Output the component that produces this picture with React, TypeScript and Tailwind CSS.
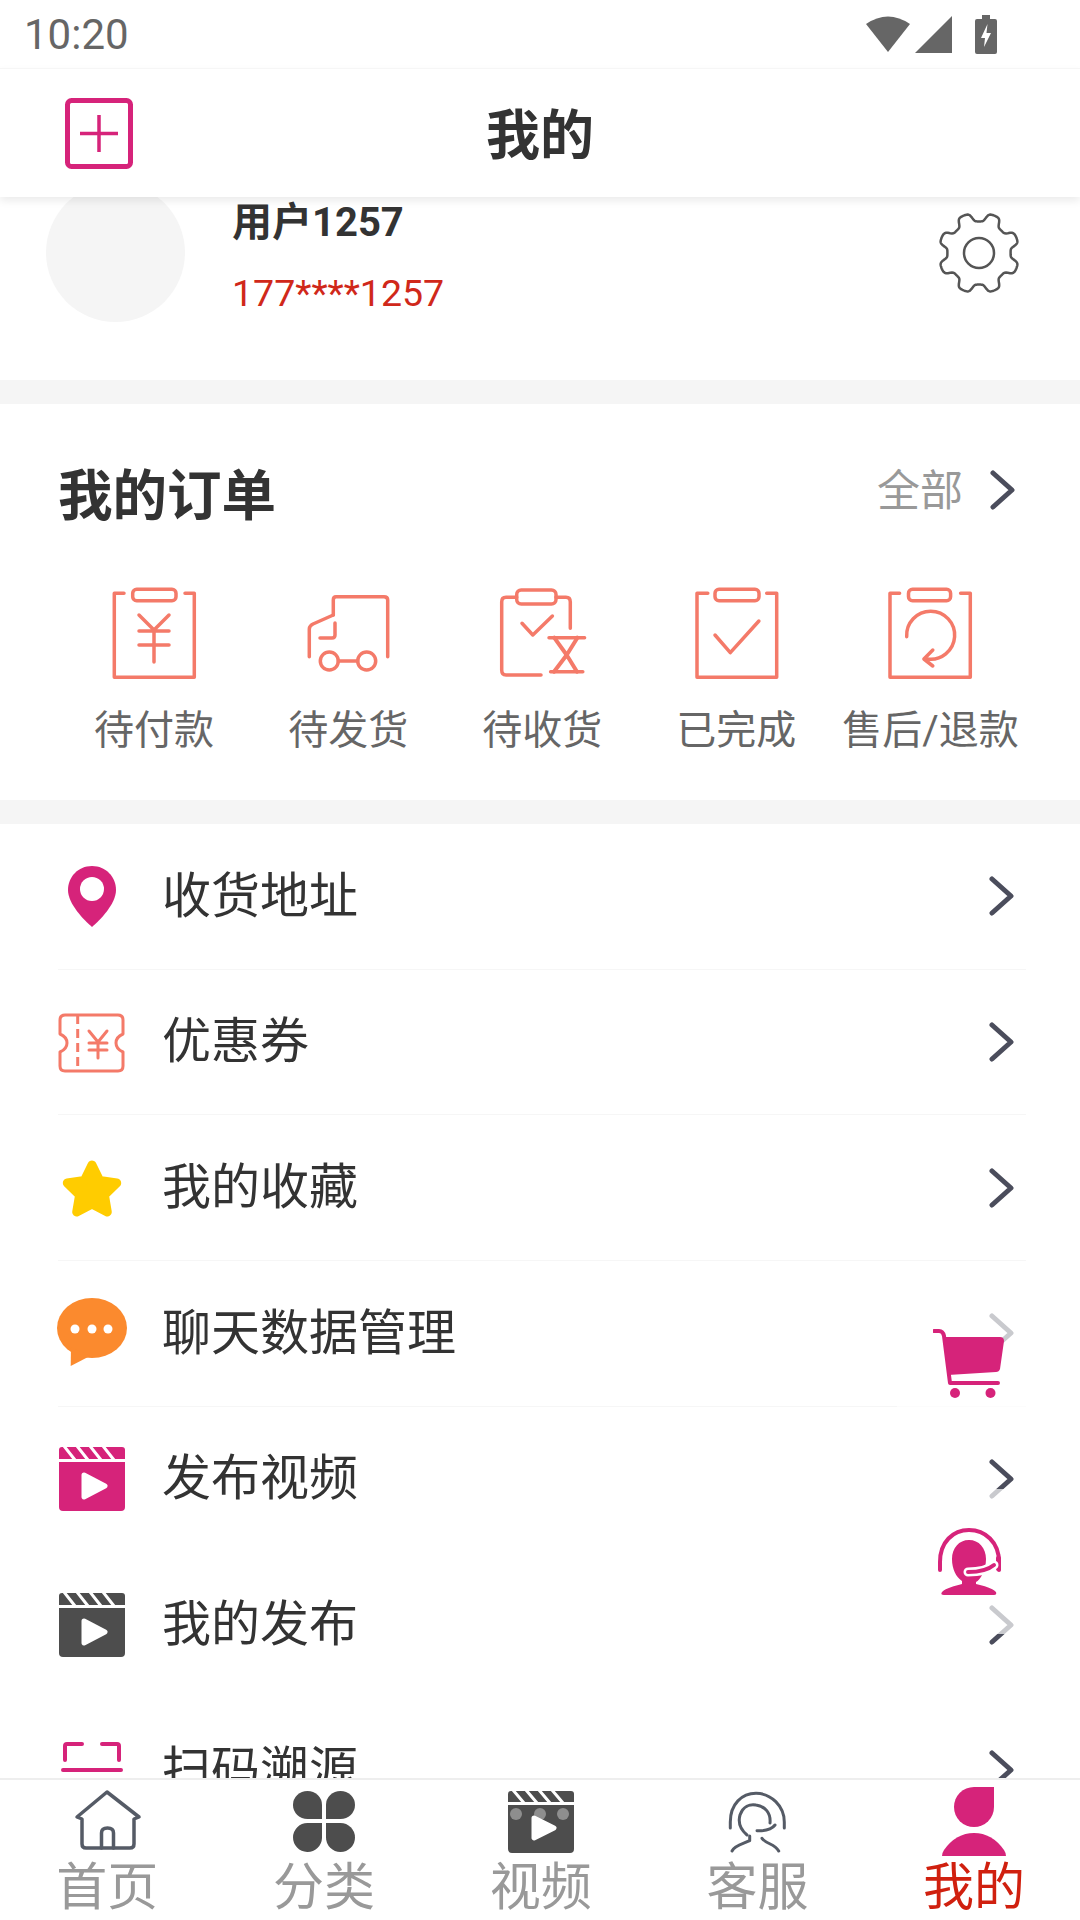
import React from 'react';

const PINK = '#d6237a';
const SALMON = '#f47a69';

function Chevron({ color = '#4b4d5c' }: { color?: string }) {
    return (
        <svg width="26" height="40" viewBox="0 0 26 40" fill="none" stroke={color} strokeWidth="5" strokeLinecap="round" strokeLinejoin="round">
            <path d="M3 3 L22 20 L3 37" />
        </svg>
    );
}

function Clapper({ color }: { color: string }) {
    return (
        <svg width="66" height="64" viewBox="0 0 66 64">
            <path d="M3 0 H63 Q66 0 66 3 V12 H0 V3 Q0 0 3 0 Z" fill={color} />
            <path d="M5 -1 L16 13 M18 -1 L29 13 M31 -1 L42 13 M44 -1 L55 13" stroke="#fff" strokeWidth="3" />
            <path d="M0 15 H66 V60 Q66 64 62 64 H4 Q0 64 0 60 Z" fill={color} />
            <path d="M25 28 L46 39 L25 50 Z" fill="#fff" stroke="#fff" strokeWidth="5" strokeLinejoin="round" />
        </svg>
    );
}

function OrderIcon({ children }: { children: React.ReactNode }) {
    return (
        <svg width="96" height="96" viewBox="0 0 96 96" fill="none" stroke={SALMON} strokeWidth="3.5" strokeLinecap="round" strokeLinejoin="round">
            {children}
        </svg>
    );
}

const orders = [
    {
        label: '待付款',
        icon: (
            <OrderIcon>
                <path d="M18 8.3 H8.3 V92.3 H88.3 V8.3 H79" />
                <rect x="26.7" y="4.3" width="43.3" height="11.4" rx="4" />
                <path d="M33 30 L48 45 L63 30 M33 46 H63 M33 60 H63 M48 45 V77" />
            </OrderIcon>
        ),
    },
    {
        label: '待发货',
        icon: (
            <OrderIcon>
                <path d="M33.3 30 V15 Q33.3 11.7 36 11.7 H84 Q87.7 11.7 87.7 15 V71.7" />
                <path d="M33.3 30 L13 39 Q9.3 41 9.3 44 V71.7" />
                <path d="M35 38 V50 Q35 53 32 53 H20" />
                <circle cx="29.3" cy="76" r="9" />
                <circle cx="66.7" cy="76" r="9" />
                <path d="M38.3 76 H57.7" />
            </OrderIcon>
        ),
    },
    {
        label: '待收货',
        icon: (
            <OrderIcon>
                <path d="M22.7 12.3 H12 Q7.7 12.3 7.7 17 V85 Q7.7 90 12 90 H47" />
                <path d="M62 12.3 H72 Q76.3 12.3 76.3 17 V43.3" />
                <rect x="22.7" y="5" width="39.3" height="14" rx="4.5" />
                <path d="M28 38.3 L38.8 50 L58.4 31" />
                <path d="M55 52.7 H90.6 M56.6 86.7 H88.8" />
                <path d="M60.2 52.7 L72.7 70 L83.4 52.7 M72.7 70 L60 86.7 M72.7 70 L83 86.7" strokeWidth="4" />
            </OrderIcon>
        ),
    },
    {
        label: '已完成',
        icon: (
            <OrderIcon>
                <path d="M19.8 8.3 H9 V92.3 H88.7 V8.3 H78.7" />
                <rect x="27" y="4.3" width="44" height="11.4" rx="4" />
                <path d="M27 50 L42.3 67.7 L70.9 36" />
            </OrderIcon>
        ),
    },
    {
        label: '售后/退款',
        icon: (
            <OrderIcon>
                <path d="M17.6 8.3 H8 V92.3 H88.3 V8.3 H78.6" />
                <rect x="26.5" y="4.3" width="42.1" height="11.4" rx="4" />
                <path d="M24.7 51.7 A24 24 0 1 1 45.4 74" />
                <path d="M50.8 65 L41.9 74 L50.8 81" />
            </OrderIcon>
        ),
    },
];

const rows: { label: string; line: boolean; icon: React.ReactNode }[] = [
    {
        label: '收货地址',
        line: true,
        icon: (
            <svg width="72" height="72" viewBox="0 0 72 72">
                <path d="M36 6 C22 6 12 17 12 30 C12 44 28 60 36 67 C44 60 60 44 60 30 C60 17 50 6 36 6 Z" fill={PINK} />
                <circle cx="36" cy="29" r="12" fill="#fff" />
            </svg>
        ),
    },
    {
        label: '优惠券',
        line: true,
        icon: (
            <svg width="72" height="72" viewBox="0 0 72 72" fill="none" stroke={SALMON} strokeWidth="3" strokeLinecap="round" strokeLinejoin="round">
                <path d="M9 9 H62 Q67 9 67 14 V28 Q60 31 60 37 Q60 43 67 46 V60 Q67 65 62 65 H9 Q4 65 4 60 V46 Q11 43 11 37 Q11 31 4 28 V14 Q4 9 9 9 Z" />
                <path d="M21.7 9 V65" strokeDasharray="9 5" strokeLinecap="butt" />
                <path d="M33 25 L42 36 L51 25 M33 37 H51 M33 44 H51 M42 36 V52" />
            </svg>
        ),
    },
    {
        label: '我的收藏',
        line: true,
        icon: (
            <svg width="72" height="72" viewBox="0 0 72 72">
                <path
                    d="M36 13 L43.6 28.5 L60.7 31 L48.4 43 L51.3 60 L36 52 L20.7 60 L23.6 43 L11.3 31 L28.4 28.5 Z"
                    fill="#ffcc00"
                    stroke="#ffcc00"
                    strokeWidth="9"
                    strokeLinejoin="round"
                />
            </svg>
        ),
    },
    {
        label: '聊天数据管理',
        line: true,
        icon: (
            <svg width="72" height="72" viewBox="0 0 72 72">
                <ellipse cx="36" cy="31" rx="35" ry="30" fill="#fb8a2e" />
                <path d="M15 50 L14.7 69 L34 59 Z" fill="#fb8a2e" />
                <circle cx="19" cy="32" r="4.5" fill="#fff" />
                <circle cx="36" cy="32" r="4.5" fill="#fff" />
                <circle cx="52" cy="32" r="4.5" fill="#fff" />
            </svg>
        ),
    },
    { label: '发布视频', line: false, icon: <Clapper color={PINK} /> },
    { label: '我的发布', line: false, icon: <Clapper color="#4d4d4d" /> },
    {
        label: '扫码溯源',
        line: false,
        icon: (
            <svg width="72" height="72" viewBox="0 0 72 72" fill="none" stroke={PINK} strokeWidth="4" strokeLinecap="round" strokeLinejoin="round">
                <path d="M26 10 H11 Q9 10 9 12 V26 M46 10 H61 Q63 10 63 12 V26 M7 36 H65 M9 46 V60 Q9 62 11 62 H26 M63 46 V60 Q63 62 61 62 H46" />
            </svg>
        ),
    },
];

const NAV_STROKE = '#555b66';

const tabs: { label: string; active?: boolean; icon: React.ReactNode }[] = [
    {
        label: '首页',
        icon: (
            <svg width="80" height="72" viewBox="0 0 80 72" fill="none" stroke={NAV_STROKE} strokeWidth="3.5" strokeLinecap="round" strokeLinejoin="round">
                <path d="M40 6 L10 31 L15 33 V58 Q15 62 19 62 H63 Q67 62 67 58 V33 L72 31 Z" />
                <path d="M34.5 62 V47 Q34.5 42 40.5 42 Q46.5 42 46.5 47 V62" />
            </svg>
        ),
    },
    {
        label: '分类',
        icon: (
            <svg width="80" height="72" viewBox="0 0 80 72" fill="#4d4d4d">
                <path d="M38 33 H23.5 A14.5 14 0 1 1 38 19 Z" />
                <path d="M42 33 V19 A14.5 14 0 1 1 56.5 33 Z" />
                <path d="M38 37 V52 A14.5 14.5 0 1 1 23.5 37 Z" />
                <path d="M42 37 H56.5 A14.5 14.5 0 1 1 42 51.5 Z" />
            </svg>
        ),
    },
    {
        label: '视频',
        icon: (
            <svg width="80" height="72" viewBox="0 0 80 72">
                <g transform="translate(7 5)">
                    <path d="M3 0 H63 Q66 0 66 3 V11 H0 V3 Q0 0 3 0 Z" fill="#4d4d4d" />
                    <path d="M5 -1 L16 12 M18 -1 L29 12 M31 -1 L42 12 M44 -1 L55 12" stroke="#fff" strokeWidth="3" />
                    <path d="M0 14 H66 V58 Q66 62 62 62 H4 Q0 62 0 58 Z" fill="#4d4d4d" />
                    <circle cx="8" cy="23" r="6" fill="#8e8e8e" />
                    <circle cx="32" cy="23" r="6" fill="#8e8e8e" />
                    <circle cx="55" cy="23" r="6" fill="#8e8e8e" />
                    <path d="M26 27 L46 37 L26 47 Z" fill="#fff" stroke="#fff" strokeWidth="5" strokeLinejoin="round" />
                </g>
            </svg>
        ),
    },
    {
        label: '客服',
        icon: (
            <svg width="80" height="72" viewBox="0 0 80 72" fill="none" stroke={NAV_STROKE} strokeWidth="3" strokeLinecap="round" strokeLinejoin="round">
                <path d="M13.3 42 V36 C13.3 18 25 7.3 39 7.3 C54 7.3 67.3 20 67.3 36 V42" />
                <path d="M30 49 C23 43 21 36 23 29 C26 20 33 18 39 19 C48 20 54 27 53 37" />
                <path d="M40 44.7 C48 45 55 43 58 39" />
                <path d="M15 65 C18 59 26 58 32.7 54.7 V50" />
                <path d="M45 52.3 C49 58 58 58 61.7 65" />
            </svg>
        ),
    },
    {
        label: '我的',
        active: true,
        icon: (
            <svg width="80" height="72" viewBox="0 0 80 72" fill={PINK}>
                <path d="M60 1 V21 A20 20 0 1 1 40 1 Z" />
                <path d="M8 70 Q8 67 10 64 Q22 47 40 47 Q58 47 70 64 Q72 67 72 70 Z" />
            </svg>
        ),
    },
];

function gearPath() {
    const points: string[] = [];
    for (let i = 0; i < 240; i++) {
        const a = (i / 240) * Math.PI * 2;
        const r = 36 - 4.5 * Math.tanh(2.2 * Math.cos(8 * a));
        points.push(`${(42 + r * Math.sin(a)).toFixed(2)} ${(42 - r * Math.cos(a)).toFixed(2)}`);
    }
    return `M${points.join(' L')} Z`;
}

export default function App() {
    return (
        <div className="relative w-[1080px] h-[1920px] flex flex-col overflow-hidden bg-white font-['Roboto','Noto_Sans_CJK_SC',sans-serif]">
            {/* Status bar */}
            <div className="h-[68px] flex items-center pl-[24px] pr-[83px] shrink-0">
                <span className="mt-[2px] text-[42px] leading-none text-[#666666]">10:20</span>
                <div className="ml-auto flex items-center">
                    <svg width="44" height="38" viewBox="0 0 44 38" fill="#666666">
                        <path d="M22 37 L0 9 Q22 -6 44 9 Z" />
                    </svg>
                    <svg className="ml-[5px]" width="37" height="37" viewBox="0 0 37 37" fill="#666666">
                        <path d="M37 0 V37 H0 Z" />
                    </svg>
                    <svg className="ml-[23px]" width="22" height="39" viewBox="0 0 22 39">
                        <path d="M7 0 H15 V4 H20 Q22 4 22 6 V37 Q22 39 20 39 H2 Q0 39 0 37 V6 Q0 4 2 4 H7 Z" fill="#666666" />
                        <path d="M12.5 9 L6 23 H10 L9 32 L16 18 H11.5 Z" fill="#fff" />
                    </svg>
                </div>
            </div>

            {/* Header */}
            <div className="relative z-10 h-[129px] shrink-0 flex items-center justify-center bg-white border-t border-[#f6f6f6] shadow-[0_4px_8px_rgba(0,0,0,0.08)]">
                <svg className="absolute left-[65px] top-[29px]" width="68" height="71" viewBox="0 0 68 71" fill="none" stroke={PINK}>
                    <rect x="2.5" y="2.5" width="63" height="66" rx="4" strokeWidth="5" />
                    <path d="M34 17 V54 M15 35.5 H53" strokeWidth="3.5" />
                </svg>
                <span className="mt-[8px] text-[54px] leading-none font-bold text-[#333333]">我的</span>
            </div>

            <div className="flex-1 min-h-0 overflow-hidden">
                {/* Profile */}
                <div className="h-[183px] flex items-start pl-[46px] pr-[59px]">
                    <div className="w-[139px] h-[139px] -mt-[14px] rounded-full bg-[#f5f5f5] shrink-0" />
                    <div className="ml-[47px] flex flex-col">
                        <span className="mt-[2px] text-[40px] leading-[48px] font-bold text-[#333333]">用户1257</span>
                        <span className="mt-[22px] text-[37.5px] leading-[48px] text-[#d0281a]">177****1257</span>
                    </div>
                    <svg className="ml-auto mt-[14px]" width="84" height="84" viewBox="0 0 84 84" fill="none" stroke="#555555" strokeWidth="2.5">
                        <path d={gearPath()} strokeLinejoin="round" />
                        <circle cx="42" cy="42" r="15" />
                    </svg>
                </div>
                <div className="h-[24px] bg-[#f5f5f5]" />

                {/* Orders */}
                <div className="pt-[62px] pb-[50px]">
                    <div className="h-[54px] flex items-center pl-[58px] pr-[64px]">
                        <span className="mt-[6px] text-[54.5px] leading-none font-bold text-[#333333]">我的订单</span>
                        <span className="ml-auto text-[43px] leading-none text-[#999999] -mt-[3px]">全部</span>
                        <span className="ml-[27px] -mt-[6px]">
                            <Chevron />
                        </span>
                    </div>
                    <div className="ml-[57px] mt-[65px] grid grid-cols-[repeat(5,194.1px)]">
                        {orders.map((o) => (
                            <div key={o.label} className="flex flex-col items-center">
                                {o.icon}
                                <span className="mt-[30px] text-[40px] leading-[40px] whitespace-nowrap text-[#666666]">{o.label}</span>
                            </div>
                        ))}
                    </div>
                </div>
                <div className="-mt-[1px] h-[24px] bg-[#f5f5f5]" />

                {/* Menu rows */}
                <div className="pl-[58px] pr-[54px]">
                    {rows.map((r) => (
                        <div
                            key={r.label}
                            className={`h-[145.67px] flex items-center pr-[11px] border-b ${r.line ? 'border-[#f6f6f6]' : 'border-transparent'}`}
                        >
                            <div className="w-[72px] -ml-[2px] flex justify-center shrink-0">{r.icon}</div>
                            <span className="ml-[34px] text-[49px] leading-none text-[#333333]">{r.label}</span>
                            <span className="ml-auto">
                                <Chevron />
                            </span>
                        </div>
                    ))}
                </div>
            </div>

            {/* Bottom navigation */}
            <div className="relative z-10 h-[142px] shrink-0 bg-white border-t-2 border-[#eeeeee] grid grid-cols-[repeat(5,216.7px)] -ml-[1px] w-[1084px] pt-[6px]">
                {tabs.map((t) => (
                    <div key={t.label} className="flex flex-col items-center">
                        {t.icon}
                        <span className={`mt-[6px] text-[51px] leading-[48px] ${t.active ? 'text-[#d0200f]' : 'text-[#999999]'}`}>{t.label}</span>
                    </div>
                ))}
            </div>

            {/* Floating cart and service buttons */}
            <div className="absolute left-[897px] top-[1291px] w-[144px] h-[145px] bg-white/70 flex items-center justify-center">
                <svg width="72" height="72" viewBox="0 0 72 72" fill={PINK}>
                    <path d="M1 3 H6 Q10 3 11 8 L17 55 H65" fill="none" stroke={PINK} strokeWidth="4" strokeLinecap="round" strokeLinejoin="round" />
                    <path d="M10 9 H67 Q71 9 71 13 L67 41 Q66 44 63 44 L15 47 Z" />
                    <circle cx="22" cy="65" r="5" />
                    <circle cx="57.5" cy="65" r="5" />
                </svg>
            </div>
            <div className="absolute left-[898px] top-[1489px] w-[144px] h-[145px] bg-white/70 flex items-center justify-center">
                <svg width="64" height="68" viewBox="0 0 64 68" fill="none">
                    <path d="M2 42 V34 C2 14 15 2 31 2 C47 2 61 14 61 34 V42" stroke={PINK} strokeWidth="4" strokeLinecap="round" />
                    <rect x="58" y="28" width="5" height="15" rx="2" fill={PINK} />
                    <path
                        d="M31 12 C41 12 48 20 48 31 C48 43 42 52 38 54 V56 C46 58 54 60 58 64 Q59 67 56 67 H6 Q2 67 4 64 C8 60 17 58 24 56 V53 C18 49 14 41 14 31 C14 20 21 12 31 12 Z"
                        fill={PINK}
                    />
                    <path d="M30 44 C40 44 50 42 56 37" stroke="#fff" strokeWidth="9" strokeLinecap="round" />
                    <path d="M30 44 C40 44 50 42 56 37" stroke={PINK} strokeWidth="4" strokeLinecap="round" />
                </svg>
            </div>
        </div>
    );
}
